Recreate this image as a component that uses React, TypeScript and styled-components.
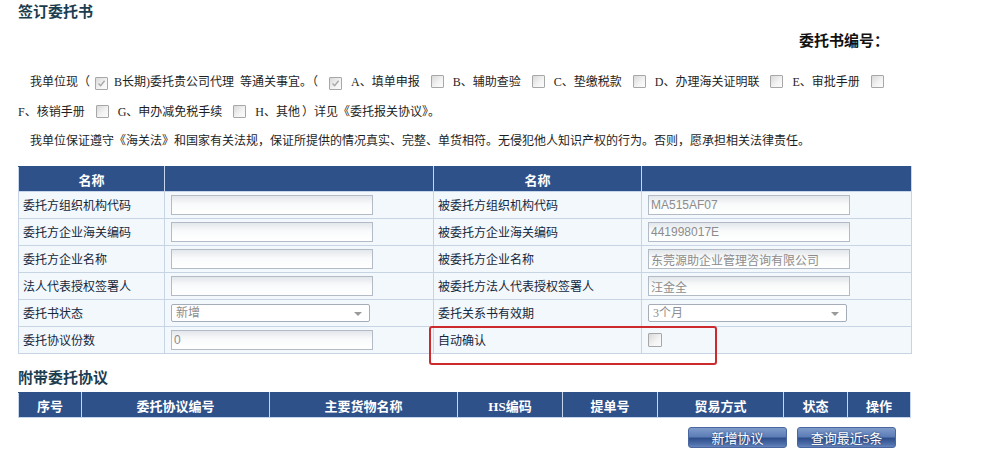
import React from "react";
import styled, { createGlobalStyle } from "styled-components";

const GlobalStyle = createGlobalStyle`
  html, body {
    margin: 0;
    padding: 0;
    background: #fff;
  }
  body {
    font-family: "Liberation Serif", "Noto Sans CJK SC", serif;
    font-size: 12px;
    color: #222;
  }
`;

const CJK = `"Liberation Serif", "Noto Sans CJK SC", serif`;
const SANS = `"Liberation Sans", "Noto Sans CJK SC", sans-serif`;

const fields = [
    { left: "委托方组织机构代码", right: "被委托方组织机构代码", value: "MA515AF07" },
    { left: "委托方企业海关编码", right: "被委托方企业海关编码", value: "441998017E" },
    { left: "委托方企业名称", right: "被委托方企业名称", value: "东莞源助企业管理咨询有限公司" },
    { left: "法人代表授权签署人", right: "被委托方法人代表授权签署人", value: "汪金全" },
];

const agreementCols = [
    { title: "序号", width: 63 },
    { title: "委托协议编号", width: 188 },
    { title: "主要货物名称", width: 188 },
    { title: "HS编码", width: 105 },
    { title: "提单号", width: 95 },
    { title: "贸易方式", width: 126 },
    { title: "状态", width: 64 },
    { title: "操作", width: 63 },
];

const CheckMark = () => (
    <svg width="9" height="9" viewBox="0 0 9 9">
        <path d="M1.5 4.6 L3.6 6.8 L7.6 1.8" fill="none" stroke="#a8a8a8" strokeWidth="1.4" />
    </svg>
);

export default () => {
    return (
        <Page>
            <GlobalStyle />
            <Title>签订委托书</Title>
            <NumberRow>委托书编号：</NumberRow>

            <Statement $mt={11}>
                我单位现（<Check $ml={5} $mr={6} $checked><CheckMark /></Check>B长期)委托贵公司代理<Sp $w={6} />等通关事宜。（
                <Check $checked><CheckMark /></Check>A、填单申报
                <Check />B、辅助查验
                <Check />C、垫缴税款
                <Check />D、办理海关证明联
                <Check />E、审批手册
                <Check />
                <br />
                F、核销手册
                <Check />G、申办减免税手续
                <Check />H、其他<Sp $w={2} />）详见《委托报关协议》。
            </Statement>
            <Statement $lh={28}>
                我单位保证遵守《海关法》和国家有关法规，保证所提供的情况真实、完整、单货相符。无侵犯他人知识产权的行为。否则，愿承担相关法律责任。
            </Statement>

            <TableWrap>
                <FormTable>
                    <colgroup>
                        <col style={{ width: 146 }} />
                        <col style={{ width: 269 }} />
                        <col style={{ width: 208 }} />
                        <col style={{ width: 270 }} />
                    </colgroup>
                    <thead>
                        <tr>
                            <HeadCell>名称</HeadCell>
                            <HeadCell />
                            <HeadCell>名称</HeadCell>
                            <HeadCell />
                        </tr>
                    </thead>
                    <tbody>
                        {fields.map((f) => (
                            <tr key={f.left}>
                                <Label>{f.left}</Label>
                                <Cell><TextInput readOnly value="" /></Cell>
                                <Label>{f.right}</Label>
                                <Cell><TextInput readOnly value={f.value} /></Cell>
                            </tr>
                        ))}
                        <tr>
                            <Label>委托书状态</Label>
                            <Cell><FakeSelect>新增</FakeSelect></Cell>
                            <Label>委托关系书有效期</Label>
                            <Cell><FakeSelect>3个月</FakeSelect></Cell>
                        </tr>
                        <tr>
                            <Label>委托协议份数</Label>
                            <Cell><TextInput readOnly value="0" /></Cell>
                            <Label>自动确认</Label>
                            <Cell><Check $ml={0} $mr={0} $big /></Cell>
                        </tr>
                    </tbody>
                </FormTable>
                <Highlight />
            </TableWrap>

            <SubTitle>附带委托协议</SubTitle>
            <AgreementTable>
                <colgroup>
                    {agreementCols.map((c) => (
                        <col key={c.title} style={{ width: c.width }} />
                    ))}
                </colgroup>
                <thead>
                    <tr>
                        {agreementCols.map((c) => (
                            <HeadCell key={c.title}>{c.title}</HeadCell>
                        ))}
                    </tr>
                </thead>
            </AgreementTable>

            <Buttons>
                <BlueButton type="button">新增协议</BlueButton>
                <BlueButton type="button">查询最近5条</BlueButton>
            </Buttons>
        </Page>
    );
};

const Page = styled.div`
    width: 893px;
    padding: 0 0 0 18px;
`;

const Title = styled.h2`
    margin: 0;
    height: 26px;
    line-height: 24px;
    font-family: ${CJK};
    font-size: 15px;
    font-weight: bold;
    color: #1c3d50;
`;

const NumberRow = styled.div`
    height: 30px;
    line-height: 30px;
    display: flex;
    justify-content: flex-end;
    padding-right: 22px;
    font-family: ${CJK};
    font-size: 15px;
    font-weight: bold;
    color: #111;
`;

const Statement = styled.p<{ $lh?: number; $mt?: number }>`
    margin: ${(p) => p.$mt || 0}px 0 0;
    line-height: ${(p) => p.$lh || 30}px;
    text-indent: 12px;
    font-size: 12px;
    font-family: ${CJK};
    color: #1e1e1e;
    white-space: nowrap;
`;

const Sp = styled.span<{ $w: number }>`
    display: inline-block;
    width: ${(p) => p.$w}px;
`;

const Check = styled.span<{ $ml?: number; $mr?: number; $checked?: boolean; $big?: boolean }>`
    display: inline-flex;
    align-items: center;
    justify-content: center;
    box-sizing: border-box;
    width: ${(p) => (p.$big ? 14 : 13)}px;
    height: ${(p) => (p.$big ? 14 : 13)}px;
    margin: 0 ${(p) => (p.$mr ?? 9)}px 0 ${(p) => (p.$ml ?? 11)}px;
    vertical-align: -2px;
    text-indent: 0;
    border: 1px solid #a7a7a7;
    border-radius: 1px;
    background: linear-gradient(135deg, #d9d9d9, #f4f4f4 60%, #fbfbfb);
    svg {
        display: block;
    }
`;

const TableWrap = styled.div`
    position: relative;
    margin-top: 11px;
`;

const FormTable = styled.table`
    width: 893px;
    table-layout: fixed;
    border-collapse: collapse;
    font-family: ${CJK};
    font-size: 12px;
`;

const HeadCell = styled.th`
    height: 24px;
    padding: 0;
    background: #2f5189;
    color: #fff;
    font-family: ${CJK};
    font-size: 13px;
    font-weight: bold;
    text-align: center;
    border: 1px solid #c4d5ec;
    border-top-color: #2f5189;
`;

const Label = styled.td`
    height: 26px;
    padding: 0 4px;
    background: #f3f8fd;
    border: 1px solid #c6d4e4;
    color: #14263a;
    font-size: 12px;
    white-space: nowrap;
    vertical-align: middle;
`;

const Cell = styled.td`
    height: 26px;
    padding: 0 0 0 6px;
    background: #f3f8fd;
    border: 1px solid #c6d4e4;
    vertical-align: middle;
    line-height: 0;
`;

const TextInput = styled.input`
    box-sizing: border-box;
    width: 202px;
    height: 20px;
    margin: 0;
    padding: 0 2px;
    border: 1px solid #b3bcc6;
    background: linear-gradient(#e3e7eb, #f9fafb 45%, #ffffff);
    color: #8c8c8c;
    font-family: ${SANS};
    font-size: 12px;
    outline: none;
`;

const FakeSelect = styled.div`
    position: relative;
    box-sizing: border-box;
    width: 199px;
    height: 18px;
    padding: 0 4px;
    border: 1px solid #a5aeb8;
    border-radius: 2px;
    background: #fff;
    color: #8e8e8e;
    font-family: ${CJK};
    font-size: 12px;
    line-height: 17px;
    &::after {
        content: "";
        position: absolute;
        right: 7px;
        top: 7px;
        border-left: 4px solid transparent;
        border-right: 4px solid transparent;
        border-top: 4px solid #9a9a9a;
    }
`;

const Highlight = styled.div`
    position: absolute;
    left: 411px;
    top: 160px;
    width: 288px;
    height: 39px;
    box-sizing: border-box;
    border: 2.5px solid #cc2a2c;
    border-radius: 3px;
    pointer-events: none;
`;

const SubTitle = styled.h3`
    margin: 12px 0 2px;
    height: 24px;
    line-height: 24px;
    font-family: ${CJK};
    font-size: 15px;
    font-weight: bold;
    color: #1c3d50;
`;

const AgreementTable = styled.table`
    width: 892px;
    table-layout: fixed;
    border-collapse: collapse;
`;

const Buttons = styled.div`
    display: flex;
    justify-content: flex-end;
    gap: 10px;
    margin-top: 9px;
    padding-right: 15px;
`;

const BlueButton = styled.button`
    width: 99px;
    height: 21px;
    padding: 0;
    border: 1px solid #4a66a0;
    border-radius: 3px;
    background: linear-gradient(#7f9ccb, #5d7db6 45%, #2f4f8c 55%, #4d6ea9 85%, #6684bd);
    color: #fff;
    font-family: ${CJK};
    font-size: 13px;
    text-shadow: 0 0 2px #1f3560;
    cursor: pointer;
`;
